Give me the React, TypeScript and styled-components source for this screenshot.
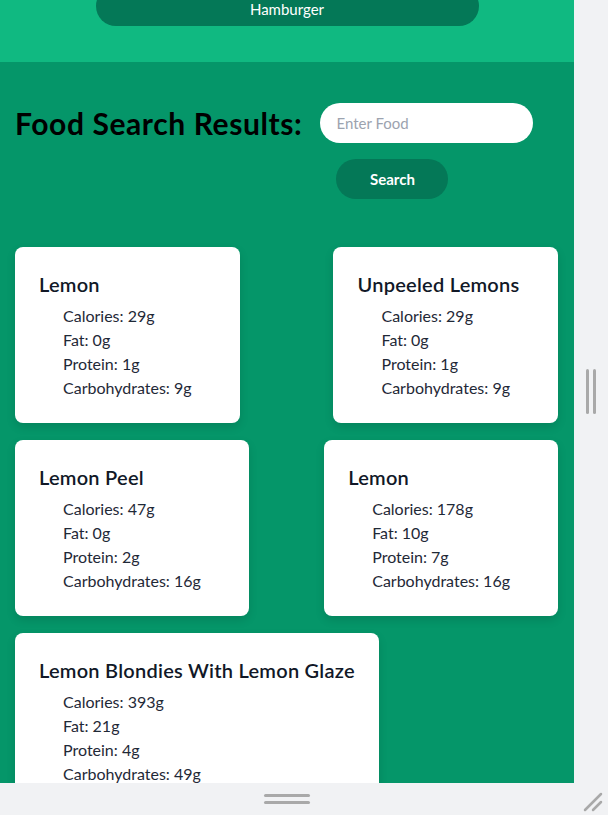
import React from "react";
import styled, { createGlobalStyle } from "styled-components";

const Global = createGlobalStyle`
  html, body { margin: 0; padding: 0; background: #f1f2f4; }
  body { font-family: "Segoe UI", Lato, "Noto Sans", sans-serif; }
  * { box-sizing: border-box; }
`;

const Frame = styled.div`
  display: grid;
  grid-template-columns: 574px 34px;
  grid-template-rows: 783px 32px;
  width: 608px;
  height: 815px;
  background: #f1f2f4;
`;

const Viewport = styled.div`
  overflow: hidden;
  background: #059669;
`;

const TopBar = styled.header`
  background: #10b981;
  height: 62px;
  display: flex;
  justify-content: center;
  align-items: flex-start;
`;

const NavButton = styled.button`
  margin-top: -14px;
  width: 383px;
  height: 40px;
  border: none;
  border-radius: 20px;
  background: #047857;
  color: #ffffff;
  font-family: inherit;
  font-size: 15px;
  padding: 6px 0 0;
`;

const SearchRow = styled.section`
  display: flex;
  align-items: flex-start;
  padding: 41px 16px 0 15px;
  gap: 18px;
`;

const Title = styled.h1`
  margin: 0;
  font-size: 30px;
  line-height: 40px;
  letter-spacing: 0.6px;
  font-weight: 700;
  color: #000000;
`;

const Form = styled.form`
  display: flex;
  flex-direction: column;
  align-items: flex-start;
  gap: 16px;
`;

const Input = styled.input`
  width: 213px;
  height: 40px;
  border: none;
  border-radius: 20px;
  padding: 0 16px;
  font-family: inherit;
  font-size: 15px;
  color: #111827;
  outline: none;
  &::placeholder { color: #9ca3af; }
`;

const SearchButton = styled.button`
  margin-left: 16px;
  width: 112px;
  height: 40px;
  border: none;
  border-radius: 20px;
  background: #047857;
  color: #ffffff;
  font-family: inherit;
  font-weight: 700;
  font-size: 15px;
`;

const Cards = styled.section`
  display: flex;
  flex-wrap: wrap;
  justify-content: space-between;
  row-gap: 17px;
  padding: 48px 16px 0 15px;
`;

const Card = styled.article`
  background: #ffffff;
  border-radius: 8px;
  padding: 24px 24px 23px;
  box-shadow: 0 4px 10px rgba(0, 0, 0, 0.12);
`;

const CardTitle = styled.h2`
  margin: 0 0 5px;
  font-size: 20px;
  line-height: 26px;
  padding-bottom: 2px;
  letter-spacing: 0.25px;
  font-weight: 600;
  color: #111827;
`;

const List = styled.ul`
  list-style: none;
  margin: 0;
  padding: 0 24px;
`;

const Item = styled.li`
  font-size: 16px;
  line-height: 24px;
  color: #1f2937;
  white-space: nowrap;
`;

const RightGutter = styled.div`
  display: flex;
  align-items: center;
  justify-content: center;
  gap: 4px;
`;

const VBar = styled.span`
  width: 3px;
  height: 45px;
  border-radius: 2px;
  background: #a9a9a9;
`;

const BottomGutter = styled.div`
  display: flex;
  flex-direction: column;
  align-items: center;
  justify-content: center;
  gap: 4px;
`;

const HBar = styled.span`
  width: 46px;
  height: 3px;
  border-radius: 2px;
  background: #a9a9a9;
`;

const Corner = styled.div`
  display: flex;
  align-items: flex-end;
  justify-content: flex-end;
  padding: 0 4px 2px 0;
`;

const foods = [
  { name: "Lemon", cal: 29, fat: 0, protein: 1, carbs: 9 },
  { name: "Unpeeled Lemons", cal: 29, fat: 0, protein: 1, carbs: 9 },
  { name: "Lemon Peel", cal: 47, fat: 0, protein: 2, carbs: 16 },
  { name: "Lemon", cal: 178, fat: 10, protein: 7, carbs: 16 },
  { name: "Lemon Blondies With Lemon Glaze", cal: 393, fat: 21, protein: 4, carbs: 49 },
];

export default function App() {
  return (
    <>
      <Global />
      <Frame>
        <Viewport>
          <TopBar>
            <NavButton>Hamburger</NavButton>
          </TopBar>
          <SearchRow>
            <Title>Food Search Results:</Title>
            <Form onSubmit={(e) => e.preventDefault()}>
              <Input placeholder="Enter Food" />
              <SearchButton type="submit">Search</SearchButton>
            </Form>
          </SearchRow>
          <Cards>
            {foods.map((f, i) => (
              <Card key={i}>
                <CardTitle>{f.name}</CardTitle>
                <List>
                  <Item>Calories: {f.cal}g</Item>
                  <Item>Fat: {f.fat}g</Item>
                  <Item>Protein: {f.protein}g</Item>
                  <Item>Carbohydrates: {f.carbs}g</Item>
                </List>
              </Card>
            ))}
          </Cards>
        </Viewport>
        <RightGutter>
          <VBar />
          <VBar />
        </RightGutter>
        <BottomGutter>
          <HBar />
          <HBar />
        </BottomGutter>
        <Corner>
          <svg width="22" height="22" viewBox="0 0 22 22">
            <line x1="3" y1="19" x2="19" y2="3" stroke="#a9a9a9" strokeWidth="2.5" strokeLinecap="round" />
            <line x1="11" y1="19" x2="19" y2="11" stroke="#a9a9a9" strokeWidth="2.5" strokeLinecap="round" />
          </svg>
        </Corner>
      </Frame>
    </>
  );
}
